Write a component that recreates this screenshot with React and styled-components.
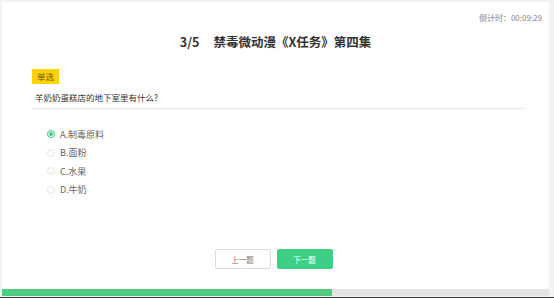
import React from 'react';
import styled, { createGlobalStyle } from 'styled-components';

const GlobalStyle = createGlobalStyle`
  html, body {
    margin: 0;
    padding: 0;
    background: #f3f3f3;
  }
  body {
    font-family: "Noto Sans CJK SC", "Noto Sans", sans-serif;
  }
`;

const Page = styled.div`
  width: 554px;
  height: 298px;
  box-sizing: border-box;
  padding: 2px 5px 1px 2px;
  border-bottom: 1px solid #3a3a3a;
  display: flex;
`;

const Card = styled.div`
  flex: 1;
  background: #fff;
  display: flex;
  flex-direction: column;
`;

const Countdown = styled.div`
  align-self: flex-end;
  margin: 11px 7px 0 0;
  font-size: 8px;
  line-height: 10px;
  color: #888;
`;

const Title = styled.h1`
  margin: 10px 0 0;
  text-align: center;
  font-size: 12.5px;
  line-height: 18px;
  font-weight: bold;
  color: #333;
  span {
    margin-right: 14px;
  }
`;

const Body = styled.div`
  padding: 0 26px 0 30px;
`;

const Badge = styled.div`
  display: inline-block;
  margin-top: 18px;
  padding: 0 5px;
  height: 15px;
  line-height: 15px;
  background: #fcd20b;
  color: #6b5a00;
  font-size: 8.5px;
`;

const Question = styled.div`
  margin-top: 6px;
  padding: 0 3px 5px;
  font-size: 8.5px;
  line-height: 12px;
  color: #333;
  border-bottom: 1px solid #e2e2e2;
`;

const Options = styled.div`
  margin-top: 19px;
  padding-left: 15px;
  display: flex;
  flex-direction: column;
  gap: 6px;
`;

const Option = styled.div`
  display: flex;
  align-items: center;
  gap: 5px;
  height: 12.5px;
  font-size: 9px;
  color: #666;
`;

const Radio = styled.span`
  width: 6px;
  height: 6px;
  border-radius: 50%;
  border: 1px solid ${p => (p.$on ? '#3bc983' : '#e6e6e6')};
  display: flex;
  align-items: center;
  justify-content: center;
  &::after {
    content: '';
    width: 4px;
    height: 4px;
    border-radius: 50%;
    background: ${p => (p.$on ? '#3bc983' : 'transparent')};
  }
`;

const Footer = styled.div`
  margin-top: auto;
  display: flex;
  justify-content: center;
  gap: 6px;
  padding: 0 4px 20px 0;
`;

const Btn = styled.button`
  width: 56px;
  height: 20px;
  box-sizing: border-box;
  border-radius: 2px;
  font-family: inherit;
  font-size: 7.5px;
  padding: 0;
  cursor: pointer;
  border: 1px solid ${p => (p.$primary ? '#3ecf85' : '#dcdcdc')};
  background: ${p => (p.$primary ? '#3ecf85' : '#fff')};
  color: ${p => (p.$primary ? '#fff' : '#777')};
`;

const Progress = styled.div`
  height: 7px;
  background: #e3e3e3;
`;

const Fill = styled.div`
  height: 100%;
  background: #4fcb80;
`;

const options = ['A.制毒原料', 'B.面粉', 'C.水果', 'D.牛奶'];

export default function App() {
  const current = 3;
  const total = 5;
  return (
    <Page>
      <GlobalStyle />
      <Card>
        <Countdown>倒计时：00:09:29</Countdown>
        <Title>
          <span>{current}/{total}</span>禁毒微动漫《X任务》第四集
        </Title>
        <Body>
          <Badge>单选</Badge>
          <Question>羊奶奶蛋糕店的地下室里有什么?</Question>
          <Options>
            {options.map((o, i) => (
              <Option key={o}>
                <Radio $on={i === 0} />
                {o}
              </Option>
            ))}
          </Options>
        </Body>
        <Footer>
          <Btn>上一题</Btn>
          <Btn $primary>下一题</Btn>
        </Footer>
        <Progress>
          <Fill style={{ width: `${(330 / 547) * 100}%` }} />
        </Progress>
      </Card>
    </Page>
  );
}
